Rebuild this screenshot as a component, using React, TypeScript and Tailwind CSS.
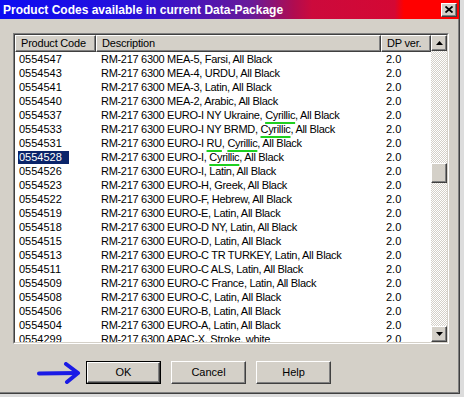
import React from 'react';

type Row = { code: string; desc: React.ReactNode; selected?: boolean };

const Green = ({ children }: { children: React.ReactNode }) => (
  <span className="underline decoration-[#1fd01f] decoration-2 underline-offset-[3px]">{children}</span>
);

const rows: Row[] = [
  { code: '0554547', desc: 'RM-217 6300 MEA-5, Farsi, All Black' },
  { code: '0554543', desc: 'RM-217 6300 MEA-4, URDU, All Black' },
  { code: '0554541', desc: 'RM-217 6300 MEA-3, Latin, All Black' },
  { code: '0554540', desc: 'RM-217 6300 MEA-2, Arabic, All Black' },
  { code: '0554537', desc: <>RM-217 6300 EURO-I NY Ukraine, <Green>Cyrillic</Green>, All Black</> },
  { code: '0554533', desc: <>RM-217 6300 EURO-I NY BRMD, <Green>Cyrillic</Green>, All Black</> },
  { code: '0554531', desc: <>RM-217 6300 EURO-I <Green>RU</Green>, <Green>Cyrillic</Green>, All Black</> },
  { code: '0554528', desc: <>RM-217 6300 EURO-I, <Green>Cyrillic</Green>, All Black</>, selected: true },
  { code: '0554526', desc: 'RM-217 6300 EURO-I, Latin, All Black' },
  { code: '0554523', desc: 'RM-217 6300 EURO-H, Greek, All Black' },
  { code: '0554522', desc: 'RM-217 6300 EURO-F, Hebrew, All Black' },
  { code: '0554519', desc: 'RM-217 6300 EURO-E, Latin, All Black' },
  { code: '0554518', desc: 'RM-217 6300 EURO-D NY, Latin, All Black' },
  { code: '0554515', desc: 'RM-217 6300 EURO-D, Latin, All Black' },
  { code: '0554513', desc: 'RM-217 6300 EURO-C TR TURKEY, Latin, All Black' },
  { code: '0554511', desc: 'RM-217 6300 EURO-C ALS, Latin, All Black' },
  { code: '0554509', desc: 'RM-217 6300 EURO-C France, Latin, All Black' },
  { code: '0554508', desc: 'RM-217 6300 EURO-C, Latin, All Black' },
  { code: '0554506', desc: 'RM-217 6300 EURO-B, Latin, All Black' },
  { code: '0554504', desc: 'RM-217 6300 EURO-A, Latin, All Black' },
  { code: '0554299', desc: 'RM-217 6300 APAC-X, Stroke, white' },
];

const raised =
  'border border-t-white border-l-white border-r-[#404040] border-b-[#404040] shadow-[inset_-1px_-1px_0_#808080]';

function ScrollButton({ down }: { down?: boolean }) {
  return (
    <div className={`w-4 h-4 bg-[#d4d0c8] flex items-center justify-center ${raised}`}>
      <svg width="7" height="4" viewBox="0 0 7 4">
        {down ? <path d="M0 0h7L3.5 4z" fill="#000" /> : <path d="M0 4h7L3.5 0z" fill="#000" />}
      </svg>
    </div>
  );
}

function Button({ label, isDefault }: { label: string; isDefault?: boolean }) {
  return (
    <div className={`w-[75px] h-[23px] ${isDefault ? 'border border-black' : ''}`}>
      <div className={`w-full h-full bg-[#d4d0c8] flex items-center justify-center text-[11px] text-black ${raised}`}>
        {label}
      </div>
    </div>
  );
}

export default function App() {
  return (
    <div className="w-[464px] h-[397px] bg-[#dcdcdc] font-['Liberation_Sans',Arial,sans-serif] text-[11px] leading-none overflow-hidden">
      <div className="w-[460px] h-[394px] bg-[#d4d0c8] border-r border-b border-r-[#404040] border-b-[#404040] shadow-[inset_-1px_-1px_0_#808080] flex flex-col">
        {/* Title bar */}
        <div className="h-[19px] flex items-center justify-between pl-[3px] pr-[2px] bg-[linear-gradient(to_right,#0c0cf2_0%,#2410dc_28%,#6a1a98_55%,#b00c50_64%,#cc0a3c_68%,#d40834_86%,#ff0000_88%,#ff0000_100%)]">
          <span className="text-white font-bold text-[12px]">Product Codes available in current Data-Package</span>
          <div className={`w-4 h-[14px] bg-[#d4d0c8] flex items-center justify-center ${raised}`}>
            <svg width="8" height="7" viewBox="0 0 8 7">
              <path d="M0.5 0.5l7 6M7.5 0.5l-7 6" stroke="#000" strokeWidth="1.8" />
            </svg>
          </div>
        </div>

        {/* List box */}
        <div className="mt-[14px] ml-[13px] w-[436px] h-[311px] border border-t-[#808080] border-l-[#808080] border-r-white border-b-white">
          <div className="w-full h-full border border-t-[#404040] border-l-[#404040] border-r-[#d4d0c8] border-b-[#d4d0c8] bg-white flex">
            <div className="flex-1 flex flex-col overflow-hidden">
              <div className="h-[17px] flex shrink-0 bg-[#d4d0c8] tracking-[-0.2px]">
                <div className={`w-[81px] h-full flex items-center pl-[5px] ${raised}`}>Product Code</div>
                <div className={`w-[285px] h-full flex items-center pl-[5px] ${raised}`}>Description</div>
                <div className={`flex-1 h-full flex items-center pl-[5px] ${raised}`}>DP ver.</div>
              </div>
              {rows.map((r) => (
                <div key={r.code} className="h-[14px] flex items-center shrink-0 text-black">
                  <div className="w-[81px] pl-[3px]">
                    <span className={`px-[1px] py-[1px] inline-block ${r.selected ? 'bg-[#0a246a] text-white w-[51px]' : ''}`}>
                      {r.code}
                    </span>
                  </div>
                  <div className="w-[285px] pl-[5px] whitespace-nowrap tracking-[-0.3px]">{r.desc}</div>
                  <div className="flex-1 pl-[5px]">2.0</div>
                </div>
              ))}
            </div>
            {/* Scrollbar */}
            <div className="w-4 flex flex-col bg-[repeating-conic-gradient(#d4d0c8_0_25%,#ffffff_0_50%)] bg-[length:2px_2px]">
              <ScrollButton />
              <div className="h-[112px]" />
              <div className={`w-4 h-[20px] bg-[#d4d0c8] ${raised}`} />
              <div className="flex-1" />
              <ScrollButton down />
            </div>
          </div>
        </div>

        {/* Buttons */}
        <div className="mt-[17px] flex items-center">
          <svg width="46" height="22" viewBox="0 0 46 22" className="ml-[37px] mr-[3px]">
            <path d="M2 11.5 L40 11" stroke="#1a1ae6" strokeWidth="4" strokeLinecap="round" />
            <path d="M29 2 L41 11 L30 20" stroke="#1a1ae6" strokeWidth="4" fill="none" strokeLinecap="round" strokeLinejoin="round" />
          </svg>
          <div className="flex gap-[10px]">
            <Button label="OK" isDefault />
            <Button label="Cancel" />
            <Button label="Help" />
          </div>
        </div>
      </div>
    </div>
  );
}
